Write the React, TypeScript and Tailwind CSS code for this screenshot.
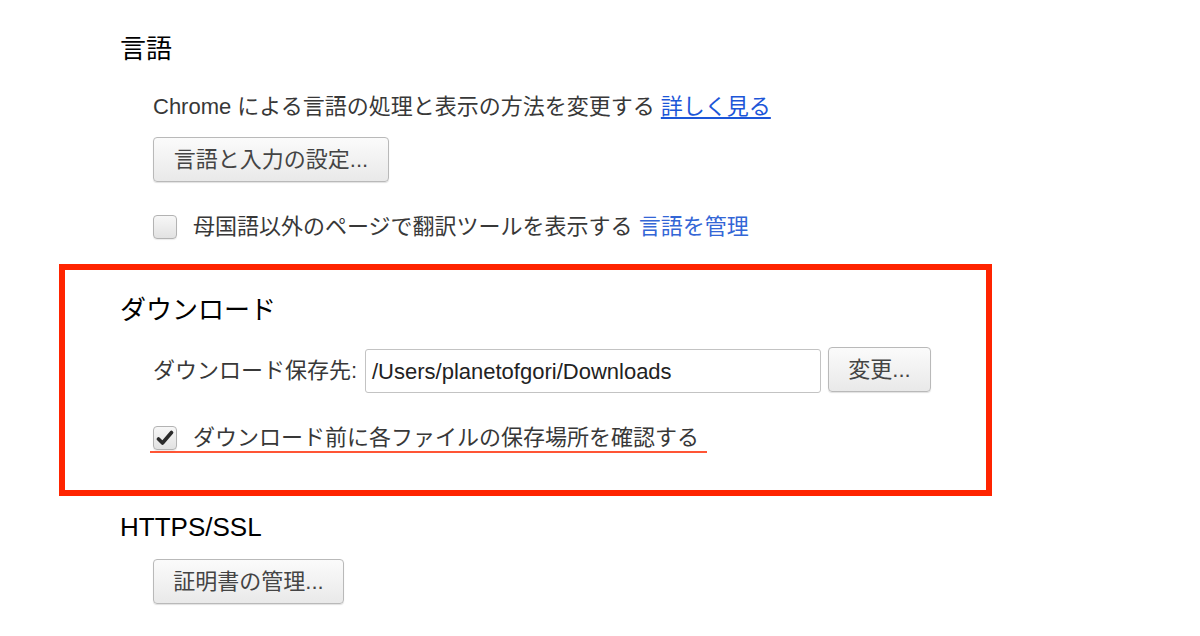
import React from 'react';

const font = "font-['Liberation_Sans','Noto_Sans_CJK_JP',sans-serif]";

const Button = ({ label, width }: { label: string; width: string }) => (
  <button
    className={`${width} h-[45px] rounded-[4px] border border-[#b9b9b9] bg-gradient-to-b from-[#fbfbfb] to-[#e9e9e9] text-[22px] leading-none text-[#444] shadow-[0_1px_1px_rgba(0,0,0,0.12)]`}
  >
    {label}
  </button>
);

const Checkbox = ({ checked }: { checked?: boolean }) => (
  <span className="flex h-[24px] w-[24px] shrink-0 items-center justify-center rounded-[4px] border border-[#b3b3b3] bg-gradient-to-b from-[#f7f7f7] to-[#e2e2e2] shadow-[0_1px_1px_rgba(0,0,0,0.08)]">
    {checked && (
      <svg width="18" height="16" viewBox="0 0 18 16">
        <path d="M2.5 9 L6.5 13 L15.5 2.5" fill="none" stroke="#2a2a2a" strokeWidth="3.6" strokeLinecap="round" strokeLinejoin="round" />
      </svg>
    )}
  </span>
);

export default function App() {
  return (
    <div className={`min-h-[636px] w-[1200px] bg-white pt-[34px] ${font} text-[#383838]`}>
      {/* 言語 */}
      <section className="pl-[120px]">
        <h2 className="text-[26px] leading-[30px] text-black">言語</h2>
        <div className="pl-[33px]">
          <p className="mt-[31px] text-[22px] leading-[24px]">
            Chrome による言語の処理と表示の方法を変更する{' '}
            <a className="text-[#1c56d8] underline underline-offset-[3px]">詳しく見る</a>
          </p>
          <div className="mt-[18px]">
            <Button label="言語と入力の設定..." width="w-[236px]" />
          </div>
          <div className="mt-[33px] flex items-center gap-[16px]">
            <Checkbox />
            <span className="text-[22px] leading-[24px]">
              母国語以外のページで翻訳ツールを表示する <a className="text-[#3366d6]">言語を管理</a>
            </span>
          </div>
        </div>
      </section>

      {/* ダウンロード */}
      <section className="ml-[59px] mt-[25px] h-[232px] w-[933px] border-[6px] border-[#ff2400] pl-[55px] pt-[25px]">
        <h2 className="text-[26px] leading-[30px] text-black">ダウンロード</h2>
        <div className="pl-[33px]">
          <div className="mt-[24px] flex items-center">
            <span className="w-[212px] text-[22px] leading-[24px]">ダウンロード保存先:</span>
            <div className="flex h-[44px] w-[456px] items-center rounded-[3px] border border-[#c3c3c3] pl-[6px] text-[22px] text-[#222]">
              /Users/planetofgori/Downloads
            </div>
            <div className="ml-[7px] -mt-[3px]">
              <Button label="変更..." width="w-[103px]" />
            </div>
          </div>
          <div className="mt-[33px] -ml-[3px] inline-flex items-center gap-[16px] border-b-2 border-[#ff5535] pb-[1px] pl-[3px] pr-[8px]">
            <Checkbox checked />
            <span className="text-[22px] leading-[24px]">ダウンロード前に各ファイルの保存場所を確認する</span>
          </div>
        </div>
      </section>

      {/* HTTPS/SSL */}
      <section className="mt-[16px] pl-[120px]">
        <h2 className="text-[26px] leading-[30px] text-black">HTTPS/SSL</h2>
        <div className="mt-[17px] pl-[33px]">
          <Button label="証明書の管理..." width="w-[191px]" />
        </div>
      </section>
    </div>
  );
}
